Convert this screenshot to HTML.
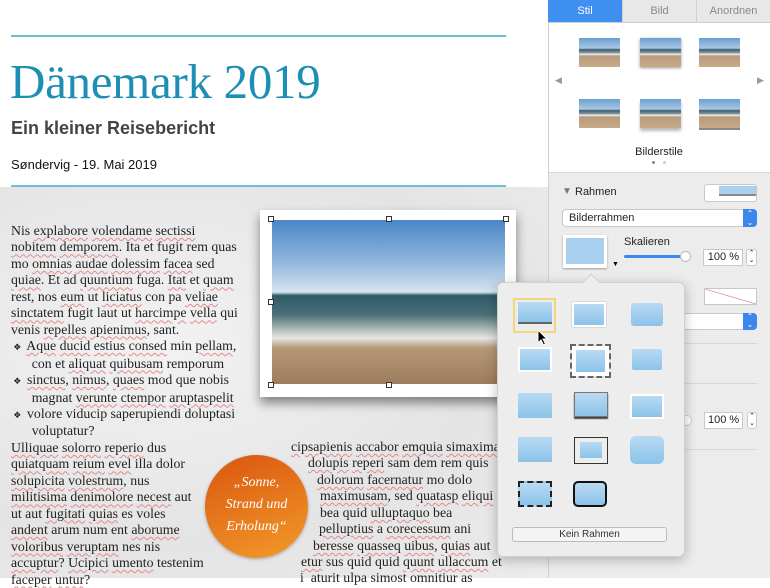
<!DOCTYPE html>
<html><head><meta charset="utf-8"><style>
*{margin:0;padding:0;box-sizing:border-box}
body{width:770px;height:578px;overflow:hidden;position:relative;background:#fff;font-family:"Liberation Sans",sans-serif}
.abs{position:absolute}
.marble{left:0;top:187px;width:548px;height:391px;background:radial-gradient(ellipse at 30% 40%,#f2f2f2,#e4e4e4 60%,#ececec),#e9e9e9}
.hl{height:2px;background:#6fbfd3;left:11px;width:495px}
.t{font-family:"Liberation Serif",serif;font-size:13.8px;color:#222;white-space:nowrap;line-height:16.45px}
.u{text-decoration:underline wavy #e58a8a;text-decoration-thickness:1px;text-underline-offset:2px}
.h{width:6px;height:6px;border:1px solid #333;background:#fff}
.side{left:548px;top:0;width:222px;height:578px;background:#ececec;border-left:1px solid #cfcfcf}
.tab{top:0;height:23px;font-size:11px;text-align:center;line-height:23px;color:#8a8a8a;background:#e8e8e8;border-bottom:1px solid #cfcfcf}
.thumb{width:41px;height:29px;background:linear-gradient(#6a9fd0 0,#a9c7e4 35%,#3d5e6f 40%,#7e8f95 50%,#eee 56%,#b79b7b 62%,#c8ab88 100%)}
.fld{background:#fff;border:1px solid #c8c8c8;font-size:11px;color:#222;white-space:nowrap}
.sep{left:562px;width:195px;height:1px;background:#d6d6d6}
.pop{left:497px;top:282px;width:188px;height:275px;background:#ededed;border:1px solid #d0d0d0;border-radius:6px;box-shadow:0 3px 12px rgba(0,0,0,.25)}
.it{width:34px;height:25px;background:linear-gradient(#b9daf2,#8cc3ea)}
</style></head><body>
<div class="abs marble"></div>
<div class="abs hl" style="top:35px"></div>
<div class="abs hl" style="top:185px"></div>
<div class="abs" style="left:10px;top:53px;font-family:'Liberation Serif',serif;font-size:49px;color:#1e8fb4;letter-spacing:-0.3px">Dänemark 2019</div>
<div class="abs" style="left:11px;top:118px;font-size:18px;font-weight:bold;color:#444">Ein kleiner Reisebericht</div>
<div class="abs" style="left:11px;top:157px;font-size:13px;color:#111">Søndervig - 19. Mai 2019</div>

<div class="abs t" style="left:11px;top:223px">
Nis <span class="u">explabore</span> <span class="u">volendame</span> <span class="u">sectissi</span><br>
<span class="u">nobitem</span> <span class="u">demporem</span>. Ita et fugit rem quas<br>
mo <span class="u">omnias</span> <span class="u">audae</span> <span class="u">dolessim</span> <span class="u">facea</span> sed<br>
<span class="u">quiae</span>. Et ad <span class="u">quuntium</span> fuga. <span class="u">Itat</span> et <span class="u">quam</span><br>
rest, nos <span class="u">eum</span> ut <span class="u">liciatus</span> con pa <span class="u">veliae</span><br>
<span class="u">sinctatem</span> fugit laut ut <span class="u">harcimpe</span> <span class="u">vella</span> qui<br>
venis <span class="u">repelles</span> <span class="u">apienimus</span>, sant.<br>
<span style="font-size:9px">&nbsp;❖&nbsp;</span> <span class="u">Aque</span> <span class="u">ducid</span> <span class="u">estius</span> <span class="u">consed</span> min <span class="u">pellam</span>,<br>
&nbsp;&nbsp;&nbsp;&nbsp;&nbsp;&nbsp;con et <span class="u">aliquat</span> <span class="u">quibusam</span> remporum<br>
<span style="font-size:9px">&nbsp;❖&nbsp;</span> <span class="u">sinctus</span>, <span class="u">nimus</span>, <span class="u">quaes</span> mod que nobis<br>
&nbsp;&nbsp;&nbsp;&nbsp;&nbsp;&nbsp;magnat <span class="u">verunte</span> <span class="u">ctempor</span> <span class="u">aruptaspelit</span><br>
<span style="font-size:9px">&nbsp;❖&nbsp;</span> volore viducip saperupiendi doluptasi<br>
&nbsp;&nbsp;&nbsp;&nbsp;&nbsp;&nbsp;voluptatur?<br>
<span class="u">Ulliquae</span> <span class="u">solorro</span> <span class="u">reperio</span> dus<br>
<span class="u">quiatquam</span> <span class="u">reium</span> <span class="u">evel</span> illa dolor<br>
<span class="u">solupicita</span> <span class="u">volestrum</span>, nus<br>
<span class="u">militisima</span> <span class="u">denimolore</span> <span class="u">necest</span> aut<br>
ut aut <span class="u">fugitati</span> <span class="u">quias</span> es voles<br>
<span class="u">andent</span> arum num ent <span class="u">aborume</span><br>
<span class="u">voloribus</span> <span class="u">veruptam</span> nes nis<br>
<span class="u">accuptur</span>? <span class="u">Ucipici</span> <span class="u">umento</span> testenim<br>
<span class="u">faceper</span> <span class="u">untur</span>?
</div>

<div class="abs t" style="left:291px;top:439px"><span class="u">cipsapienis</span> <span class="u">accabor</span> <span class="u">emquia</span> <span class="u">simaxima</span></div>
<div class="abs t" style="left:308px;top:455px"><span class="u">dolupis</span> <span class="u">reperi</span> sam dem rem quis</div>
<div class="abs t" style="left:317px;top:472px"><span class="u">dolorum</span> <span class="u">facernatur</span> mo dolo</div>
<div class="abs t" style="left:320px;top:488px"><span class="u">maximusam</span>, sed <span class="u">quatasp</span> <span class="u">eliqui</span></div>
<div class="abs t" style="left:320px;top:505px">bea quid <span class="u">ulluptaquo</span> bea</div>
<div class="abs t" style="left:319px;top:521px"><span class="u">pelluptius</span> a <span class="u">corecessum</span> ani</div>
<div class="abs t" style="left:313px;top:538px"><span class="u">beresse</span> <span class="u">quasseq</span> <span class="u">uibus</span>, <span class="u">quias</span> aut</div>
<div class="abs t" style="left:301px;top:554px"><span class="u">etur</span> sus quid quid <span class="u">quunt</span> <span class="u">ullaccum</span> et</div>
<div class="abs t" style="left:300px;top:570px">i&nbsp; aturit ulpa simost omnitiur as</div>

<div class="abs" style="left:205px;top:455px;width:103px;height:103px;border-radius:50%;background:linear-gradient(160deg,#d9560f,#f39a2a);box-shadow:0 1px 3px rgba(0,0,0,.3)"></div>
<div class="abs" style="left:205px;top:472px;width:103px;text-align:center;font-family:'Liberation Serif',serif;font-style:italic;font-size:14px;line-height:22px;color:#fff">„Sonne,<br>Strand und<br>Erholung“</div>

<div class="abs" style="left:260px;top:210px;width:256px;height:187px;background:#fff;box-shadow:0 6px 10px rgba(0,0,0,.45)"></div>
<div class="abs" style="left:272px;top:220px;width:233px;height:164px;background:linear-gradient(#4b86c8 0,#8fb5dc 25%,#d6e4ef 44%,#2f5a66 46%,#4c7079 58%,#a9b5b2 66%,#e5e7e3 72%,#b59878 78%,#9c7c5c 100%)"></div>
<div class="abs h" style="left:268px;top:216px"></div><div class="abs h" style="left:386px;top:216px"></div><div class="abs h" style="left:503px;top:216px"></div>
<div class="abs h" style="left:268px;top:299px"></div>
<div class="abs h" style="left:268px;top:382px"></div><div class="abs h" style="left:386px;top:382px"></div>

<div class="abs side"></div>
<div class="abs" style="left:549px;top:23px;width:221px;height:150px;background:#fff;border-bottom:1px solid #d6d6d6"></div>
<div class="abs tab" style="left:548px;width:74px;background:#3f8ff0;color:#fff">Stil</div>
<div class="abs tab" style="left:622px;width:74px;border-left:1px solid #d0d0d0">Bild</div>
<div class="abs tab" style="left:696px;width:74px;border-left:1px solid #d0d0d0">Anordnen</div>
<div class="abs thumb" style="left:579px;top:38px"></div><div class="abs thumb" style="left:640px;top:38px;box-shadow:0 1px 3px #999"></div><div class="abs thumb" style="left:699px;top:38px"></div>
<div class="abs thumb" style="left:579px;top:99px"></div><div class="abs thumb" style="left:640px;top:99px;box-shadow:0 3px 3px #bbb"></div><div class="abs thumb" style="left:699px;top:99px;box-shadow:0 2px 0 #888"></div>
<div class="abs" style="left:555px;top:75px;font-size:9px;color:#999">◀</div><div class="abs" style="left:757px;top:75px;font-size:9px;color:#999">▶</div>
<div class="abs" style="left:548px;top:146px;width:222px;text-align:center;font-size:11px;color:#222">Bilderstile</div>
<div class="abs" style="left:652px;top:161px;width:3px;height:3px;border-radius:50%;background:#888"></div><div class="abs" style="left:663px;top:161px;width:3px;height:3px;border-radius:50%;background:#ccc"></div>
<div class="abs" style="left:562px;top:186px;font-size:10px;color:#777">▼</div>
<div class="abs" style="left:575px;top:186px;font-size:11px;color:#222">Rahmen</div>
<div class="abs fld" style="left:704px;top:184px;width:53px;height:18px;border-radius:3px"><div style="position:absolute;left:14px;top:1px;width:37px;height:10px;background:#a9d0ee;border-bottom:2px solid #888"></div></div>
<div class="abs fld" style="left:562px;top:209px;width:195px;height:18px;border-radius:4px;padding:2px 6px">Bilderrahmen</div>
<div class="abs" style="left:743px;top:209px;width:14px;height:18px;background:#3b87ee;border-radius:0 4px 4px 0;color:#fff;font-size:8px;text-align:center;line-height:9px">⌃<br>⌄</div>
<div class="abs" style="left:563px;top:235px;width:44px;height:33px;background:#fff;box-shadow:0 1px 2px #999"><div style="margin:3px;height:26px;background:#a9d0ee"></div></div>
<div class="abs" style="left:612px;top:261px;font-size:7px">▼</div>
<div class="abs" style="left:624px;top:236px;font-size:11px;color:#222">Skalieren</div>
<div class="abs" style="left:624px;top:255px;width:62px;height:3px;background:#3b87ee;border-radius:2px"></div>
<div class="abs" style="left:680px;top:251px;width:11px;height:11px;border-radius:50%;background:#fff;border:1px solid #bbb"></div>
<div class="abs fld" style="left:703px;top:249px;width:40px;height:17px;text-align:right;padding:1px 3px">100 %</div>
<div class="abs fld" style="left:746px;top:249px;width:11px;height:17px;border-radius:3px;font-size:7px;line-height:7px;text-align:center">⌃<br>⌄</div>
<div class="abs fld" style="left:704px;top:288px;width:53px;height:17px;background:linear-gradient(to top right,#fff 48%,#e66 50%,#fff 52%)"></div>
<div class="abs fld" style="left:660px;top:313px;width:97px;height:17px;border-radius:4px"></div>
<div class="abs" style="left:743px;top:313px;width:14px;height:17px;background:#3b87ee;border-radius:0 4px 4px 0;color:#fff;font-size:8px;text-align:center;line-height:8px">⌃<br>⌄</div>
<div class="abs sep" style="top:343px"></div><div class="abs sep" style="top:383px"></div><div class="abs sep" style="top:449px"></div>
<div class="abs" style="left:682px;top:415px;width:10px;height:11px;border-radius:50%;background:#fff;border:1px solid #ccc"></div>
<div class="abs fld" style="left:704px;top:412px;width:39px;height:17px;text-align:right;padding:1px 3px">100 %</div>
<div class="abs fld" style="left:747px;top:412px;width:10px;height:17px;border-radius:3px;font-size:7px;line-height:7px;text-align:center">⌃<br>⌄</div>

<div class="abs pop"></div>
<div class="abs" style="left:585px;top:276px;width:12px;height:12px;background:#ededed;border-left:1px solid #d0d0d0;border-top:1px solid #d0d0d0;transform:rotate(45deg)"></div>
<div class="abs" style="left:513px;top:298px;width:43px;height:35px;border:2px solid #f0d77a"></div>
<div class="abs it" style="left:518px;top:302px;height:22px;background:linear-gradient(#b9daf2,#8cc3ea);border-bottom:2px solid #666"></div>
<div class="abs it" style="left:572px;top:302px;border:2px solid #fff;box-shadow:0 0 1px #888"></div>
<div class="abs it" style="left:630px;top:302px;border:1px solid #eee;border-radius:4px"></div>
<div class="abs it" style="left:518px;top:347px;border:2px solid #fff"></div>
<div class="abs it" style="left:572px;top:346px;width:37px;height:30px;border:4px solid #fff;outline:2px dashed #666"></div>
<div class="abs it" style="left:630px;top:347px;border:2px solid #eee;border-radius:4px"></div>
<div class="abs it" style="left:518px;top:393px"></div>
<div class="abs it" style="left:574px;top:392px;border:1px solid #777;box-shadow:0 2px 1px #444"></div>
<div class="abs it" style="left:630px;top:394px;border:2px solid #fff"></div>
<div class="abs it" style="left:518px;top:437px"></div>
<div class="abs" style="left:574px;top:437px;width:34px;height:27px;border:1px solid #333"></div>
<div class="abs it" style="left:580px;top:442px;width:22px;height:16px"></div>
<div class="abs it" style="left:630px;top:436px;height:28px;border-radius:6px"></div>
<div class="abs it" style="left:518px;top:481px;height:26px;border:2px dashed #222"></div>
<div class="abs it" style="left:573px;top:481px;height:26px;border:2px solid #111;border-radius:5px"></div>
<div class="abs" style="left:512px;top:527px;width:155px;height:15px;border:1px solid #bbb;border-radius:3px;background:#f4f4f4;font-size:10px;text-align:center;line-height:13px;color:#333">Kein Rahmen</div>
<svg class="abs" style="left:537px;top:329px" width="12" height="17" viewBox="0 0 12 17"><path d="M1 1 L1 14 L4 11 L6.5 16 L8.5 15 L6 10 L10 10 Z" fill="#000" stroke="#fff" stroke-width="1"/></svg>
</body></html>
